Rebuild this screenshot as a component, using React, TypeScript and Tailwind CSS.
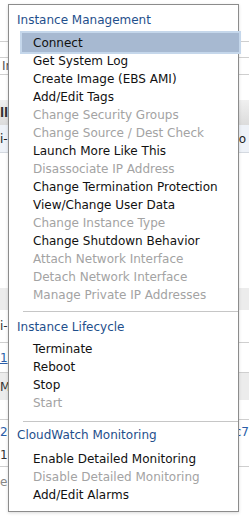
import React from "react";

type Item = { label: string; off?: boolean; active?: boolean };

const management: Item[] = [
  { label: "Connect", active: true },
  { label: "Get System Log" },
  { label: "Create Image (EBS AMI)" },
  { label: "Add/Edit Tags" },
  { label: "Change Security Groups", off: true },
  { label: "Change Source / Dest Check", off: true },
  { label: "Launch More Like This" },
  { label: "Disassociate IP Address", off: true },
  { label: "Change Termination Protection" },
  { label: "View/Change User Data" },
  { label: "Change Instance Type", off: true },
  { label: "Change Shutdown Behavior" },
  { label: "Attach Network Interface", off: true },
  { label: "Detach Network Interface", off: true },
  { label: "Manage Private IP Addresses", off: true },
];

const lifecycle: Item[] = [
  { label: "Terminate" },
  { label: "Reboot" },
  { label: "Stop" },
  { label: "Start", off: true },
];

const monitoring: Item[] = [
  { label: "Enable Detailed Monitoring" },
  { label: "Disable Detailed Monitoring", off: true },
  { label: "Add/Edit Alarms" },
];

const MenuRow = ({ item }: { item: Item }) => {
  if (item.active) {
    return (
      <div className="ml-[13px] -mr-[1px] h-[19px] flex items-center pl-[11px] bg-[#a7b9d1] shadow-[0_0_0_2px_#c5d7eb] text-[#111]">
        {item.label}
      </div>
    );
  }
  return (
    <div
      className={
        "h-[18px] flex items-center pl-[24px] " +
        (item.off ? "text-[#a3a3a3]" : "text-[#111]")
      }
    >
      {item.label}
    </div>
  );
};

const Header = ({ children }: { children: React.ReactNode }) => (
  <div className="h-[18px] flex items-center pl-[8px] text-[#1f4f8c]">{children}</div>
);

const Separator = () => <div className="ml-[14px] h-px bg-[#c6c6c6]" />;

const ActionsMenu = () => (
  <div className="absolute left-[8px] top-[4px] w-[231px] h-[508px] bg-white border border-[#8c8c8c] shadow-[0_1px_3px_rgba(0,0,0,0.15)]">
    <div className="pt-[6px]">
      <Header>Instance Management</Header>
      <div className="mt-[4px]">
        {management.map((it) => (
          <MenuRow key={it.label} item={it} />
        ))}
      </div>
      <div className="mt-[7px]">
        <Separator />
      </div>
      <div className="mt-[6px]">
        <Header>Instance Lifecycle</Header>
      </div>
      <div className="mt-[4px]">
        {lifecycle.map((it) => (
          <MenuRow key={it.label} item={it} />
        ))}
      </div>
      <div className="mt-[9px]">
        <Separator />
      </div>
      <div className="mt-[4px]">
        <Header>CloudWatch Monitoring</Header>
      </div>
      <div className="mt-[6px]">
        {monitoring.map((it) => (
          <MenuRow key={it.label} item={it} />
        ))}
      </div>
    </div>
  </div>
);

// table behind the menu, only the edges are visible
const BackgroundTable = () => (
  <div className="text-[12px] text-[#222]">
    <div className="h-[42px] border-b border-[#cfcfcf]" />
    <div className="h-[16px] border-b border-[#cfcfcf]" />
    <div className="h-[17px] border-b border-[#cfcfcf] flex items-center pl-[2px] text-[#555]">Ir</div>
    <div className="h-[25px]" />
    <div className="h-[25px] bg-gradient-to-b from-[#f0f0f0] to-[#dcdcdc] flex items-center font-bold text-[#333]">
      ll
    </div>
    <div className="h-[28px] bg-[#eef2f8] border-b border-[#d4d9e0] flex items-center justify-between pr-[3px]">
      <span>i-</span>
      <span>o</span>
    </div>
    <div className="h-[135px]" />
    <div className="h-[22px] bg-[#ececec]" />
    <div className="h-[33px] border-b border-[#cfcfcf] flex items-center text-[#333]">i-</div>
    <div className="h-[30px] border-b border-[#cfcfcf] flex items-center text-[#2a5ea8] underline">1</div>
    <div className="h-[27px] bg-[#ececec] flex items-center text-[#333]">Mc</div>
    <div className="h-[20px] border-b border-[#cfcfcf]" />
    <div className="h-[24px] flex items-center justify-between text-[#2a5ea8]">
      <span>2.</span>
      <span>c7</span>
    </div>
    <div className="h-[23px] border-b border-[#cfcfcf] flex items-center text-[#333]">1</div>
    <div className="h-[30px] flex items-center text-[#888]">e</div>
  </div>
);

export default function App() {
  return (
    <div className="relative w-[249px] h-[519px] overflow-hidden bg-white text-[12px] font-['DejaVu_Sans',Verdana,sans-serif]">
      <BackgroundTable />
      <ActionsMenu />
    </div>
  );
}
